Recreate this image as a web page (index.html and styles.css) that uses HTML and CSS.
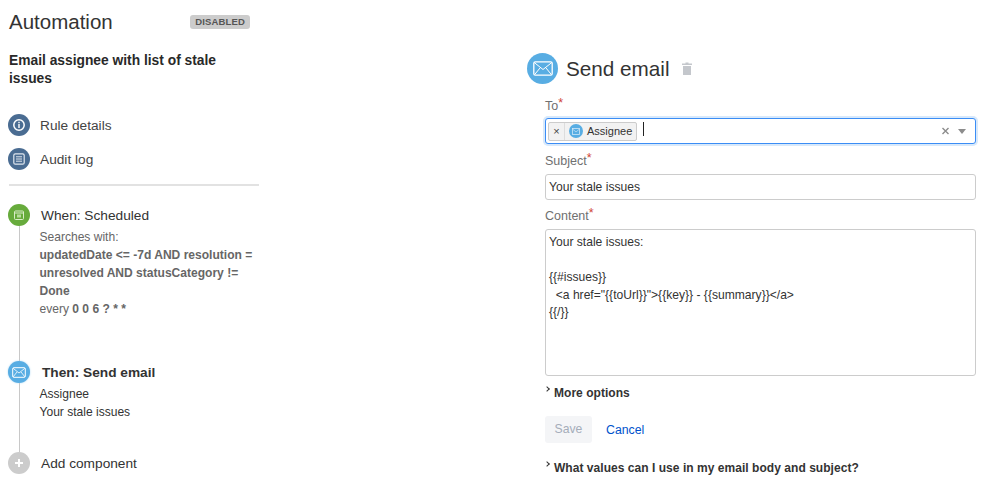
FILE: index.html
```html
<!doctype html>
<html>
	<head>
		<title>Automation</title>
		<link rel="stylesheet" href="styles.css">
	</head>
	<body>
		<div class="sidebar">
			<div class="top">
				<h1>Automation</h1>
				<span class="lozenge">DISABLED</span>
			</div>
			<h2>Email assignee with list of stale issues</h2>

			<div class="nav">
				<div class="nav-item">
					<span class="dot dot-navy">
						<svg width="14" height="14" viewBox="0 0 14 14"><circle cx="7" cy="7" r="5.2" fill="none" stroke="#fff" stroke-width="1.5"/><rect x="6.3" y="6" width="1.4" height="4" fill="#fff"/><rect x="6.3" y="3.8" width="1.4" height="1.4" fill="#fff"/></svg>
					</span>
					Rule details
				</div>
				<div class="nav-item">
					<span class="dot dot-navy">
						<svg width="14" height="14" viewBox="0 0 14 14"><rect x="1.8" y="1.8" width="10.4" height="10.4" rx="1.5" fill="none" stroke="#dfe6ee" stroke-width="1.2"/><path d="M4 4.8h6M4 7h6M4 9.2h6" stroke="#dfe6ee" stroke-width="1"/></svg>
					</span>
					Audit log
				</div>
			</div>

			<div class="steps">
				<div class="step step-when">
					<div class="rail">
						<span class="dot dot-green">
							<svg width="12" height="12" viewBox="0 0 12 12"><rect x="1.5" y="2" width="9" height="8.5" rx="1" fill="none" stroke="#d9ecc8" stroke-width="1"/><path d="M1.5 4h9" stroke="#d9ecc8" stroke-width="1"/><rect x="4" y="5.5" width="4" height="3" fill="#b7dc9c"/></svg>
						</span>
						<span class="line"></span>
					</div>
					<div class="step-body">
						<div class="step-title">When: Scheduled</div>
						<div class="step-text muted">
							Searches with:<br>
							<b>updatedDate &lt;= -7d AND resolution = unresolved AND statusCategory != Done</b><br>
							every <b>0 0 6 ? * *</b>
						</div>
					</div>
				</div>
				<div class="step step-then">
					<div class="rail">
						<span class="dot dot-blue">
							<svg width="14" height="11" viewBox="0 0 14 11"><rect x="0.7" y="0.7" width="12.6" height="9.6" rx="1" fill="none" stroke="#fff" stroke-width="1"/><path d="M1 1.2L7 6l6-4.8M1 10l4-5M13 10L9 5" fill="none" stroke="#fff" stroke-width="0.8"/></svg>
						</span>
						<span class="line"></span>
					</div>
					<div class="step-body">
						<div class="step-title selected">Then: Send email</div>
						<div class="step-text">Assignee<br>Your stale issues</div>
					</div>
				</div>
				<div class="step step-add">
					<div class="rail">
						<span class="dot dot-grey">
							<svg width="10" height="10" viewBox="0 0 10 10"><path d="M5 1v8M1 5h8" stroke="#fff" stroke-width="2"/></svg>
						</span>
					</div>
					<div class="step-body">
						<div class="step-title">Add component</div>
					</div>
				</div>
			</div>
		</div>

		<div class="main">
			<div class="head">
				<span class="dot dot-big">
					<svg width="20" height="15" viewBox="0 0 20 15"><rect x="0.8" y="0.8" width="18.4" height="13.4" rx="1.5" fill="none" stroke="#fff" stroke-width="1.3"/><path d="M1.2 1.5L10 8.5l8.8-7M1.5 13.7L7 7M18.5 13.7L13 7" fill="none" stroke="#fff" stroke-width="1"/></svg>
				</span>
				<span class="head-title">Send email</span>
				<svg class="trash" width="10" height="13" viewBox="0 0 10 13"><path d="M3.5 1.500V.5h3v1H10V3H0V1.500zM1 4h8v9H1z" fill="#c4c7cc"/></svg>
			</div>

			<form class="form">
				<label class="label">To<i>*</i></label>
				<div class="input focused">
					<span class="tag">
						<span class="tag-x">×</span>
						<span class="tag-main">
							<span class="dot dot-tiny">
								<svg width="8" height="7" viewBox="0 0 8 7"><rect x="0.5" y="0.5" width="7" height="6" fill="none" stroke="#cfe7f7" stroke-width="0.8"/><path d="M0.500 1L4 4l3.500-3" fill="none" stroke="#cfe7f7" stroke-width="0.7"/></svg>
							</span>
							Assignee
						</span>
					</span>
					<span class="caret"></span>
					<span class="spacer"></span>
					<svg class="clear" width="7" height="8" viewBox="0 0 7 8"><path d="M0.500 1l6 6M6.500 1l-6 6" stroke="#8c8c8c" stroke-width="1.400"/></svg>
					<span class="arrow"></span>
				</div>

				<label class="label">Subject<i>*</i></label>
				<div class="input">Your stale issues</div>

				<label class="label">Content<i>*</i></label>
				<div class="textarea">Your stale issues:

{{#issues}}
  &lt;a href="{{toUrl}}"&gt;{{key}} - {{summary}}&lt;/a&gt;
{{/}}</div>

				<div class="toggle toggle-more"><span class="chevron"></span>More options</div>

				<div class="actions">
					<span class="btn-save">Save</span>
					<a class="cancel" href="#">Cancel</a>
				</div>

				<div class="toggle"><span class="chevron"></span>What values can I use in my email body and subject?</div>
			</form>
		</div>
	</body>
</html>
```

FILE: styles.css
```css
* {
	margin: 0;
	padding: 0;
	box-sizing: border-box;
}

html,
body {
	height: 495px;
	overflow: hidden;
}

body {
	display: flex;
	background: #fff;
	font-family: "Liberation Sans", Arial, sans-serif;
	font-size: 12px;
	color: #333;
}

.dot {
	display: flex;
	align-items: center;
	justify-content: center;
	flex: none;
	width: 22px;
	height: 22px;
	border-radius: 50%;
}
.dot-navy {
	background: #4a6c92;
}
.dot-green {
	background: #67ab3c;
}
.dot-blue {
	background: #58ade3;
	box-shadow: 0 0 2px #a9d6f3;
}
.dot-grey {
	background: #ccc;
}

.sidebar {
	flex: none;
	width: 258px;
	margin-left: 8px;
}
.top {
	display: flex;
	align-items: center;
	justify-content: space-between;
	width: 242px;
	padding: 8px 0 0 1px;
}
h1 {
	font-size: 20.5px;
	font-weight: normal;
	line-height: 28px;
	color: #333;
}
.lozenge {
	background: #ccc;
	border-radius: 3px;
	padding: 0 5px;
	font-size: 9.5px;
	font-weight: bold;
	line-height: 14px;
	letter-spacing: 0.15px;
	color: #555;
}
h2 {
	width: 232px;
	margin: 16px 0 0 1px;
	font-size: 13.8px;
	font-weight: bold;
	line-height: 17.5px;
	color: #292929;
}

.nav {
	margin-top: 27px;
	padding-bottom: 14px;
	border-bottom: 2px solid #e2e2e2;
	width: 250px;
	margin-left: 1px;
}
.nav-item {
	display: flex;
	align-items: center;
	gap: 10px;
	height: 22px;
	margin-left: -1px;
	margin-bottom: 12px;
	font-size: 13.7px;
	color: #444;
}
.nav-item:last-child {
	margin-bottom: 0;
}

.steps {
	margin-top: 18px;
}
.step {
	display: flex;
	gap: 11px;
}
.step-when {
	height: 157px;
}
.step-then {
	height: 91px;
}
.rail {
	display: flex;
	flex-direction: column;
	align-items: center;
	flex: none;
	width: 22px;
}
.line {
	flex: 1;
	width: 1px;
	background: #c8c8c8;
}
.step-body {
	padding-top: 2px;
}
.step-title {
	font-size: 13.7px;
	line-height: 20px;
	color: #333;
}
.selected {
	margin-left: 1px;
	font-weight: bold;
}
.step-text {
	margin-top: 2px;
	width: 222px;
	font-size: 12.05px;
	line-height: 18px;
	color: #333;
	margin-left: -1.5px;
}
.muted {
	color: #666;
}

.main {
	flex: none;
	width: 450px;
	margin-left: 261px;
}
.head {
	display: flex;
	align-items: center;
	padding-top: 53px;
}
.dot-big {
	width: 31px;
	height: 31px;
	background: #58ade3;
}
.head-title {
	margin-left: 8px;
	font-size: 20.7px;
	line-height: 31px;
	color: #333;
}
.trash {
	margin-left: 12px;
}

.form {
	width: 431px;
	margin: 13px 0 0 18px;
}
.label {
	display: block;
	margin-top: 7px;
	height: 22px;
	font-size: 12.5px;
	line-height: 18px;
	color: #707070;
}
.label i {
	position: relative;
	top: -3px;
	font-style: normal;
	color: #d04437;
}
.input {
	display: flex;
	align-items: center;
	height: 26px;
	padding-left: 3px;
	background: #fff;
	border: 1px solid #ccc;
	border-radius: 3px;
	font-size: 12.1px;
	color: #333;
}
.focused {
	margin: -1px 0 8px;
	border-color: #3b8df5;
	box-shadow: 0 0 0 2px #d8e9fb;
	padding-left: 2px;
}
.tag {
	display: flex;
	align-items: stretch;
	height: 19px;
	background: #f2f2f2;
	border: 1px solid #ccc;
	border-radius: 2px;
	font-size: 11px;
}
.tag-x {
	display: flex;
	align-items: center;
	justify-content: center;
	width: 16px;
	border-right: 1px solid #ddd;
	font-size: 11px;
	color: #444;
}
.tag-main {
	display: flex;
	align-items: center;
	gap: 4px;
	padding: 0 4px;
}
.dot-tiny {
	width: 14px;
	height: 14px;
	background: #58ade3;
}
.caret {
	width: 1px;
	height: 14px;
	margin: -5px 0 0 6px;
	background: #222;
}
.spacer {
	flex: 1;
}
.clear {
	margin-right: 9px;
}
.arrow {
	width: 0;
	height: 0;
	margin-right: 9px;
	border: 4px solid transparent;
	border-top: 5px solid #8c8c8c;
	border-bottom: 0;
}
.textarea {
	height: 147px;
	padding: 4px 3px;
	border: 1px solid #ccc;
	border-radius: 3px;
	font-size: 12.1px;
	line-height: 17.5px;
	white-space: pre-wrap;
	color: #333;
}

.toggle {
	display: flex;
	align-items: center;
	font-size: 12px;
	font-weight: bold;
	letter-spacing: 0.04px;
	color: #333;
	line-height: 16px;
}
.toggle-more {
	margin-top: 9px;
}
.chevron {
	width: 4px;
	height: 4px;
	margin: -8px 5px 0 0;
	border-top: 1px solid #333;
	border-right: 1px solid #333;
	transform: rotate(45deg);
}
.actions {
	display: flex;
	align-items: center;
	gap: 14px;
	margin: 15px 0 17px;
}
.btn-save {
	width: 47px;
	height: 27px;
	background: #f4f5f7;
	border-radius: 3px;
	font-size: 12.2px;
	line-height: 27px;
	text-align: center;
	color: #a5adba;
}
.cancel {
	font-size: 12.3px;
	color: #0052cc;
	text-decoration: none;
}
```
